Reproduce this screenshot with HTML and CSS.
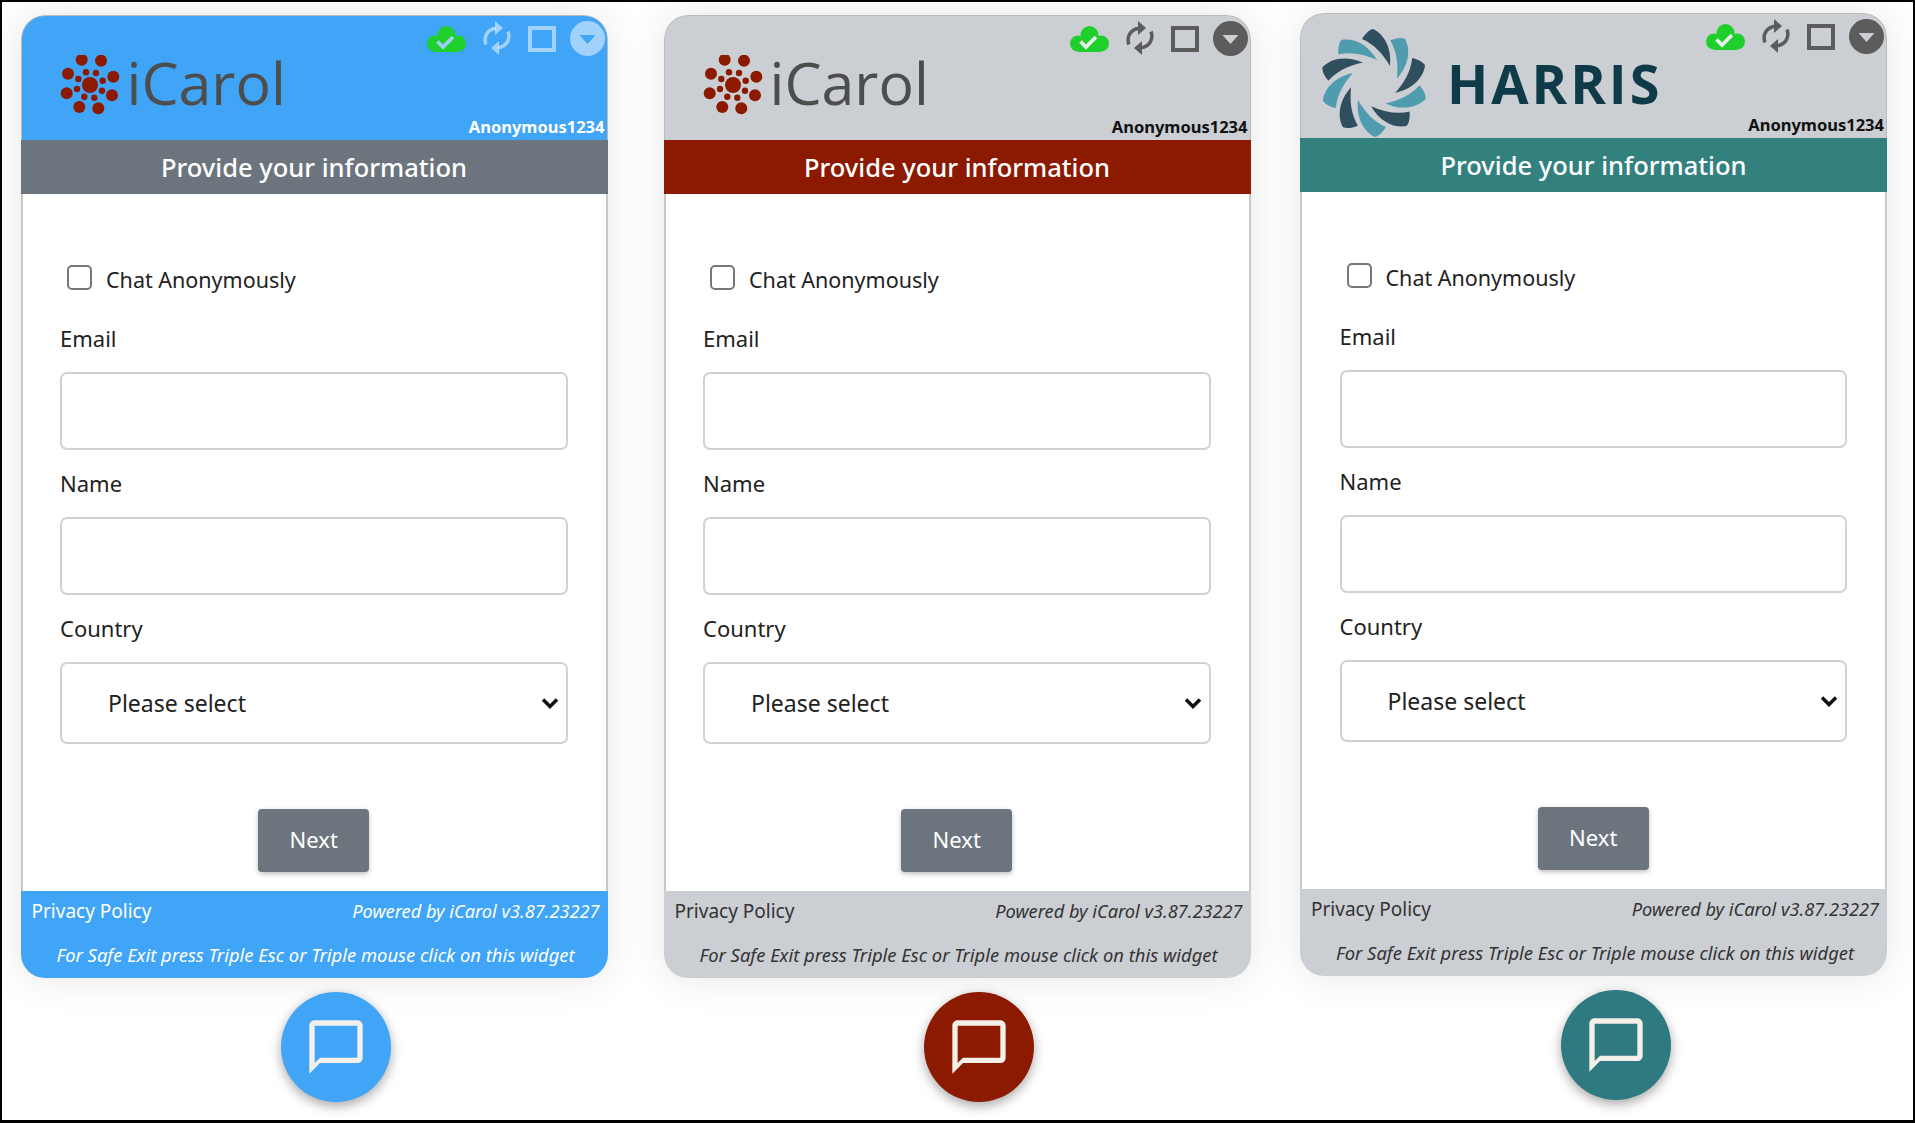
FILE: index.html
```html
<!DOCTYPE html>
<html lang="en">
<head>
  <meta charset="UTF-8">
  <title>Chat widget themes</title>
  <link rel="stylesheet" href="styles.css">
</head>
<body>

<!-- shared icons -->
<svg class="icon-defs" xmlns="http://www.w3.org/2000/svg">
  <symbol id="i-cloud" viewBox="0 0 39 26">
    <g fill="#1fcf2b">
      <circle cx="19.500" cy="9" r="9"/>
      <circle cx="8" cy="17.500" r="8"/>
      <circle cx="31" cy="17.500" r="8"/>
      <rect x="8" y="12" width="23" height="14"/>
    </g>
    <path fill="none" stroke="var(--tick)" stroke-width="3.800" d="M10.500 15.500l5.500 5.500 10-10"/>
  </symbol>
  <symbol id="i-sync" viewBox="0 0 28 36">
    <g fill="none" stroke="currentColor" stroke-width="3.500">
      <path d="M3 24.500C.5 18 3.500 9.500 13 8.200"/>
      <path d="M25 11.500C27.500 18 24.500 26.500 15 27.800"/>
    </g>
    <path fill="currentColor" d="M12 1l8 7-8 7zM16 21l-8 7 8 7z"/>
  </symbol>
  <symbol id="i-window" viewBox="0 0 28 26">
    <rect x="2" y="2" width="24" height="22" fill="none" stroke="currentColor" stroke-width="4"/>
  </symbol>
  <symbol id="i-min" viewBox="0 0 35 35">
    <path fill="currentColor" fill-rule="evenodd" d="M17.500 0a17.500 17.500 0 1 0 0 35 17.500 17.500 0 0 0 0-35zM9.500 14h16l-8 9z"/>
  </symbol>
  <symbol id="i-chevron" viewBox="0 0 18 12">
    <path fill="none" stroke="#111" stroke-width="3.500" d="M2 2.500l7 7 7-7"/>
  </symbol>
  <symbol id="i-chat" viewBox="0 0 24 24">
    <path fill="currentColor" d="M20 2H4c-1.100 0-2 .9-2 2v18l4-4h14c1.100 0 2-.9 2-2V4c0-1.100-.9-2-2-2zm0 14H6l-2 2V4h16v12z"/>
  </symbol>
  <symbol id="i-flower" viewBox="-30 -30 60 60">
    <g fill="#8b1a00">
      <circle r="8"/>
      <circle cx="-8.300" cy="-25.300" r="6"/><circle cx="11" cy="-24.300" r="6"/>
      <circle cx="23.300" cy="-8.300" r="6"/><circle cx="22" cy="10.300" r="6"/>
      <circle cx="8.300" cy="23.300" r="6"/><circle cx="-10.700" cy="22" r="6"/>
      <circle cx="-23.300" cy="8.300" r="6"/><circle cx="-22" cy="-11.300" r="6"/>
      <circle cx="-4" cy="-12.700" r="3.200"/><circle cx="6" cy="-12" r="3.200"/>
      <circle cx="12.700" cy="-4.300" r="3.200"/><circle cx="12" cy="5.700" r="3.200"/>
      <circle cx="4.300" cy="12.700" r="3.200"/><circle cx="-5.700" cy="11.700" r="3.200"/>
      <circle cx="-13" cy="4" r="3.200"/><circle cx="-11.700" cy="-6" r="3.200"/>
    </g>
  </symbol>
  <symbol id="i-swirl" viewBox="-56 -56 112 112">
    <defs>
      <path id="blade" d="M-12-44C-9-49-5-53-1-54 10-49 18-35 16-17 9-29 0-39-12-44z"/>
    </defs>
    <g fill="#2f4f5e">
      <use href="#blade"/>
      <use href="#blade" transform="rotate(72)"/>
      <use href="#blade" transform="rotate(144)"/>
      <use href="#blade" transform="rotate(216)"/>
      <use href="#blade" transform="rotate(288)"/>
    </g>
    <g fill="#4f9cae">
      <use href="#blade" transform="rotate(36)"/>
      <use href="#blade" transform="rotate(108)"/>
      <use href="#blade" transform="rotate(180)"/>
      <use href="#blade" transform="rotate(252)"/>
      <use href="#blade" transform="rotate(324)"/>
    </g>
  </symbol>
</svg>

<main class="page">

  <!-- blue theme -->
  <section class="col col-blue">
    <div class="card">
      <header class="head">
        <div class="brand">
          <svg class="flower"><use href="#i-flower"/></svg>
          <span class="brand-name">iCarol</span>
        </div>
        <div class="head-side">
          <div class="tools">
            <svg class="tool-cloud"><use href="#i-cloud"/></svg>
            <svg class="tool-sync"><use href="#i-sync"/></svg>
            <svg class="tool-window"><use href="#i-window"/></svg>
            <svg class="tool-min"><use href="#i-min"/></svg>
          </div>
          <div class="user">Anonymous1234</div>
        </div>
      </header>
      <h2 class="title">Provide your information</h2>
      <form class="form">
        <label class="anon"><input type="checkbox"><span>Chat Anonymously</span></label>
        <label class="lbl">Email</label>
        <input class="field" type="text">
        <label class="lbl">Name</label>
        <input class="field" type="text">
        <label class="lbl">Country</label>
        <div class="select-wrap">
          <select class="field field-select"><option>Please select</option></select>
          <svg class="chevron"><use href="#i-chevron"/></svg>
        </div>
        <button class="next" type="button">Next</button>
      </form>
      <footer class="foot">
        <div class="foot-row"><span>Privacy Policy</span><em>Powered by iCarol v3.87.23227</em></div>
        <div class="foot-exit">For Safe Exit press Triple Esc or Triple mouse click on this widget</div>
      </footer>
    </div>
    <div class="fab"><svg><use href="#i-chat"/></svg></div>
  </section>

  <!-- red theme -->
  <section class="col col-red">
    <div class="card">
      <header class="head">
        <div class="brand">
          <svg class="flower"><use href="#i-flower"/></svg>
          <span class="brand-name">iCarol</span>
        </div>
        <div class="head-side">
          <div class="tools">
            <svg class="tool-cloud"><use href="#i-cloud"/></svg>
            <svg class="tool-sync"><use href="#i-sync"/></svg>
            <svg class="tool-window"><use href="#i-window"/></svg>
            <svg class="tool-min"><use href="#i-min"/></svg>
          </div>
          <div class="user">Anonymous1234</div>
        </div>
      </header>
      <h2 class="title">Provide your information</h2>
      <form class="form">
        <label class="anon"><input type="checkbox"><span>Chat Anonymously</span></label>
        <label class="lbl">Email</label>
        <input class="field" type="text">
        <label class="lbl">Name</label>
        <input class="field" type="text">
        <label class="lbl">Country</label>
        <div class="select-wrap">
          <select class="field field-select"><option>Please select</option></select>
          <svg class="chevron"><use href="#i-chevron"/></svg>
        </div>
        <button class="next" type="button">Next</button>
      </form>
      <footer class="foot">
        <div class="foot-row"><span>Privacy Policy</span><em>Powered by iCarol v3.87.23227</em></div>
        <div class="foot-exit">For Safe Exit press Triple Esc or Triple mouse click on this widget</div>
      </footer>
    </div>
    <div class="fab"><svg><use href="#i-chat"/></svg></div>
  </section>

  <!-- harris theme -->
  <section class="col col-teal">
    <div class="card">
      <header class="head">
        <div class="brand brand-harris">
          <svg class="swirl"><use href="#i-swirl"/></svg>
          <span class="brand-harris-name">HARRIS</span>
        </div>
        <div class="head-side">
          <div class="tools">
            <svg class="tool-cloud"><use href="#i-cloud"/></svg>
            <svg class="tool-sync"><use href="#i-sync"/></svg>
            <svg class="tool-window"><use href="#i-window"/></svg>
            <svg class="tool-min"><use href="#i-min"/></svg>
          </div>
          <div class="user">Anonymous1234</div>
        </div>
      </header>
      <h2 class="title">Provide your information</h2>
      <form class="form">
        <label class="anon"><input type="checkbox"><span>Chat Anonymously</span></label>
        <label class="lbl">Email</label>
        <input class="field" type="text">
        <label class="lbl">Name</label>
        <input class="field" type="text">
        <label class="lbl">Country</label>
        <div class="select-wrap">
          <select class="field field-select"><option>Please select</option></select>
          <svg class="chevron"><use href="#i-chevron"/></svg>
        </div>
        <button class="next" type="button">Next</button>
      </form>
      <footer class="foot">
        <div class="foot-row"><span>Privacy Policy</span><em>Powered by iCarol v3.87.23227</em></div>
        <div class="foot-exit">For Safe Exit press Triple Esc or Triple mouse click on this widget</div>
      </footer>
    </div>
    <div class="fab"><svg><use href="#i-chat"/></svg></div>
  </section>

</main>
</body>
</html>
```

FILE: styles.css
```css
* {
  box-sizing: border-box;
}

html, body {
  margin: 0;
  height: 100%;
}

body {
  font-family: 'Noto Sans', 'Open Sans', sans-serif;
  color: #222;
  background: #fff;
}

.icon-defs {
  position: absolute;
  width: 0;
  height: 0;
}

.page {
  display: flex;
  align-items: flex-start;
  height: 1123px;
  padding: 13px 0 0 18.5px;
  border: solid #000;
  border-width: 2px 2px 3px 2px;
  overflow: hidden;
}

/* themes */
.col-blue {
  --head: #40a4f7;
  --title: #6c757d;
  --foot: #40a4f7;
  --foot-text: #fff;
  --user: #fff;
  --tool: rgba(255, 255, 255, 0.5);
  --tick: #a0d0f0;
  --fab: #40a4f7;
}

.col-red {
  --head: #cbced2;
  --title: #8b1a00;
  --foot: #cbced2;
  --foot-text: #333;
  --user: #111;
  --tool: #5c5c5c;
  --tick: #e6f0e6;
  --fab: #8b1a00;
  margin-left: 56px;
}

.col-teal {
  --head: #cbced2;
  --title: #32817f;
  --foot: #cbced2;
  --foot-text: #333;
  --user: #111;
  --tool: #5c5c5c;
  --tick: #e6f0e6;
  --fab: #2e7a80;
  margin-left: 49.500px;
  margin-top: -2px;
}

.col {
  width: 587px;
  flex: none;
}

.card {
  height: 963px;
  display: flex;
  flex-direction: column;
  border-radius: 24px;
  background: #fff;
  box-shadow: 0 0 40px rgba(0, 0, 0, 0.1);
  overflow: hidden;
}

/* header */
.head {
  height: 124.500px;
  display: flex;
  justify-content: space-between;
  padding: 4px 2px 3px 0;
  background: var(--head);
  border: 1px solid #bbb;
  border-bottom: none;
  border-radius: 24px 24px 0 0;
}

.brand {
  display: flex;
  align-items: center;
  padding: 14px 0 0 38px;
}

.flower {
  width: 60px;
  height: 60px;
}

.brand-name {
  margin: 0 0 6px 7px;
  font-family: 'Open Sans', sans-serif;
  font-size: 59px;
  line-height: 1;
  color: #4d4d4d;
}

.brand-harris {
  padding: 13px 0 0 17px;
}

.swirl {
  width: 112px;
  height: 112px;
}

.brand-harris-name {
  margin: 0 0 0 17px;
  font-family: 'Open Sans', sans-serif;
  font-weight: 700;
  font-size: 54px;
  letter-spacing: 3px;
  line-height: 1;
  color: #0f3a48;
}

.head-side {
  display: flex;
  flex-direction: column;
  justify-content: space-between;
  align-items: flex-end;
}

.tools {
  display: flex;
  align-items: center;
  color: var(--tool);
}

.tool-cloud {
  width: 39px;
  height: 26px;
  margin-top: 2px;
}

.tool-sync {
  width: 28px;
  height: 36px;
  margin-left: 17px;
}

.tool-window {
  width: 28px;
  height: 26px;
  margin-left: 17px;
  margin-top: 2px;
}

.tool-min {
  width: 35px;
  height: 35px;
  margin-left: 14px;
}

.user {
  font-size: 16.500px;
  font-weight: 700;
  line-height: 20px;
  color: var(--user);
}

.title {
  margin: 0;
  height: 54.500px;
  line-height: 55px;
  text-align: center;
  font-size: 25.500px;
  font-weight: 500;
  color: #fff;
  background: var(--title);
}

/* form */
.form {
  flex: 1;
  display: flex;
  flex-direction: column;
  padding: 0 38px 0 37.500px;
  border: solid #c8c8c8;
  border-width: 0 2px;
}

.anon {
  display: flex;
  align-items: center;
  margin: 70px 0 0 7px;
  height: 30px;
  font-size: 21.500px;
}

.anon input {
  width: 25px;
  height: 25px;
  margin: 0 14px 4px 0;
  appearance: none;
  background: #fff;
  border: 2px solid #777;
  border-radius: 5px;
}

.lbl {
  display: block;
  height: 30px;
  line-height: 30px;
  font-size: 22px;
  margin: 18px 0 19px;
}

.anon + .lbl {
  margin-top: 29px;
}

.field {
  display: block;
  width: 100%;
  height: 78px;
  background: #fff;
  border: 2px solid #d2d2d2;
  border-radius: 7px;
}

.select-wrap {
  position: relative;
}

.field-select {
  height: 82px;
  padding-left: 46px;
  appearance: none;
  font-family: inherit;
  font-size: 23px;
  color: #222;
}

.chevron {
  position: absolute;
  right: 9px;
  top: 35px;
  width: 18px;
  height: 12px;
}

.next {
  align-self: center;
  width: 111px;
  height: 63px;
  margin-top: 65px;
  padding: 0 0 4px;
  border: none;
  border-radius: 4px;
  font-family: inherit;
  font-size: 22px;
  color: #fff;
  background: #6c757d;
  box-shadow: 0 2px 5px rgba(0, 0, 0, 0.25);
}

/* footer */
.foot {
  height: 87px;
  padding: 6px 8px 0 11px;
  background: var(--foot);
  color: var(--foot-text);
}

.foot-row {
  display: flex;
  justify-content: space-between;
  align-items: center;
  height: 28px;
  font-size: 19px;
}

.foot-row em {
  font-size: 18.200px;
}

.foot-exit {
  margin-top: 17px;
  text-align: center;
  font-size: 18.400px;
  font-style: italic;
}

.fab {
  width: 110px;
  height: 110px;
  margin: 14px 0 0 260.500px;
  display: flex;
  align-items: center;
  justify-content: center;
  border-radius: 50%;
  color: #f5f1ea;
  background: var(--fab);
  box-shadow: 0 4px 12px rgba(0, 0, 0, 0.35);
}

.fab svg {
  width: 64px;
  height: 64px;
}
```
